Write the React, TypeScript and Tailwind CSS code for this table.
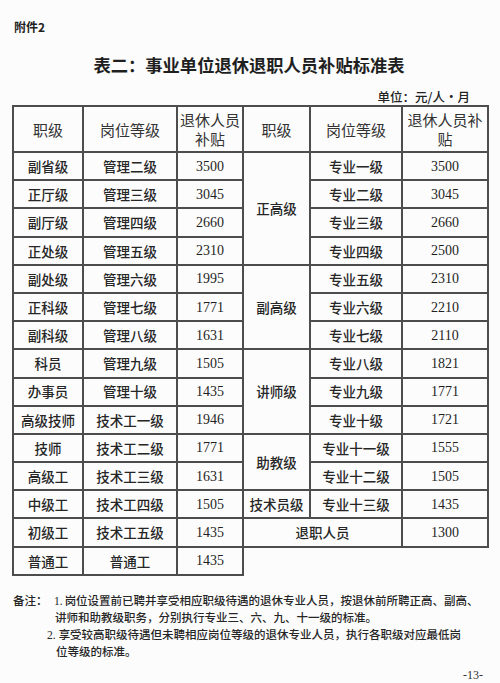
import React from "react";

const cjk = "font-['Noto_Sans_CJK_SC',sans-serif]";
const serif = "font-['Liberation_Serif','Noto_Sans_CJK_SC',serif]";

const left: [string, string, string][] = [
  ["副省级", "管理二级", "3500"],
  ["正厅级", "管理三级", "3045"],
  ["副厅级", "管理四级", "2660"],
  ["正处级", "管理五级", "2310"],
  ["副处级", "管理六级", "1995"],
  ["正科级", "管理七级", "1771"],
  ["副科级", "管理八级", "1631"],
  ["科员", "管理九级", "1505"],
  ["办事员", "管理十级", "1435"],
  ["高级技师", "技术工一级", "1946"],
  ["技师", "技术工二级", "1771"],
  ["高级工", "技术工三级", "1631"],
  ["中级工", "技术工四级", "1505"],
  ["初级工", "技术工五级", "1435"],
  ["普通工", "普通工", "1435"],
];

interface RightRow {
  level?: { text: string; span: number };
  grade?: string;
  amount?: string;
  merged?: string;
}

const right: RightRow[] = [
  { level: { text: "正高级", span: 4 }, grade: "专业一级", amount: "3500" },
  { grade: "专业二级", amount: "3045" },
  { grade: "专业三级", amount: "2660" },
  { grade: "专业四级", amount: "2500" },
  { level: { text: "副高级", span: 3 }, grade: "专业五级", amount: "2310" },
  { grade: "专业六级", amount: "2210" },
  { grade: "专业七级", amount: "2110" },
  { level: { text: "讲师级", span: 3 }, grade: "专业八级", amount: "1821" },
  { grade: "专业九级", amount: "1771" },
  { grade: "专业十级", amount: "1721" },
  { level: { text: "助教级", span: 2 }, grade: "专业十一级", amount: "1555" },
  { grade: "专业十二级", amount: "1505" },
  { level: { text: "技术员级", span: 1 }, grade: "专业十三级", amount: "1435" },
  { merged: "退职人员", amount: "1300" },
  {},
];

const cell = "border-2 border-[#4d4d4d] text-center align-middle p-0";
const body = `${cell} ${cjk} text-[13.5px] font-medium text-[#262626] h-[28.2px]`;
const num = `${cell} ${serif} text-[14px] text-[#1f1f1f] h-[28.2px]`;
const head = `${cell} ${cjk} text-[15px] leading-[19px] text-[#333] h-[46px]`;

export default function App() {
  return (
    <div className="w-[500px] h-[683px] bg-[#fcfcfc] overflow-hidden pt-[19px] text-[#222]">
      <div className={`${cjk} pl-[14px] text-[12px] leading-[16px] font-bold`}>附件2</div>
      <div className={`${cjk} mt-[19px] text-center text-[17.3px] leading-[22px] font-bold text-[#1f1f1f] pr-[2px]`}>
        表二：事业单位退休退职人员补贴标准表
      </div>
      <div className={`${cjk} mt-[13px] pr-[30px] text-right text-[12.5px] leading-[16px] font-medium`}>
        单位：元/人·月
      </div>
      <table className="ml-[12px] w-[475px] table-fixed border-collapse">
        <colgroup>
          <col className="w-[70px]" />
          <col className="w-[94px]" />
          <col className="w-[66px]" />
          <col className="w-[67px]" />
          <col className="w-[92px]" />
          <col className="w-[86px]" />
        </colgroup>
        <tbody>
          <tr>
            <td className={head}>职级</td>
            <td className={head}>岗位等级</td>
            <td className={head}>
              退休人员
              <br />
              补贴
            </td>
            <td className={head}>职级</td>
            <td className={head}>岗位等级</td>
            <td className={head}>
              退休人员补
              <br />
              贴
            </td>
          </tr>
          {left.map(([name, grade, amount], i) => {
            const r = right[i];
            return (
              <tr key={i}>
                <td className={body}>{name}</td>
                <td className={body}>{grade}</td>
                <td className={num}>{amount}</td>
                {r.level && (
                  <td rowSpan={r.level.span} className={body}>
                    {r.level.text}
                  </td>
                )}
                {r.grade && <td className={body}>{r.grade}</td>}
                {r.merged && (
                  <td colSpan={2} className={body}>
                    {r.merged}
                  </td>
                )}
                {r.amount && <td className={num}>{r.amount}</td>}
              </tr>
            );
          })}
        </tbody>
      </table>
      <div className={`${cjk} mt-[16px] pl-[13px] flex text-[11.5px] leading-[16.5px] font-medium text-[#262626]`}>
        <div className="w-[33px] shrink-0 whitespace-nowrap">备注：</div>
        <div>
          <div className="pl-[8px] whitespace-nowrap">
            <span className={`${serif} mr-[2px]`}>1.</span>岗位设置前已聘并享受相应职级待遇的退休专业人员，按退休前所聘正高、副高、
          </div>
          <div className="pl-[9px] whitespace-nowrap">讲师和助教级职务，分别执行专业三、六、九、十一级的标准。</div>
          <div className="pl-[1px] whitespace-nowrap">
            <span className={`${serif} mr-[3px]`}>2.</span>享受较高职级待遇但未聘相应岗位等级的退休专业人员，执行各职级对应最低岗
          </div>
          <div className="pl-[10px] whitespace-nowrap">位等级的标准。</div>
        </div>
      </div>
      <div className={`${serif} mt-[9px] pr-[17px] text-right text-[12px] leading-[12px] text-[#333]`}>-13-</div>
    </div>
  );
}
